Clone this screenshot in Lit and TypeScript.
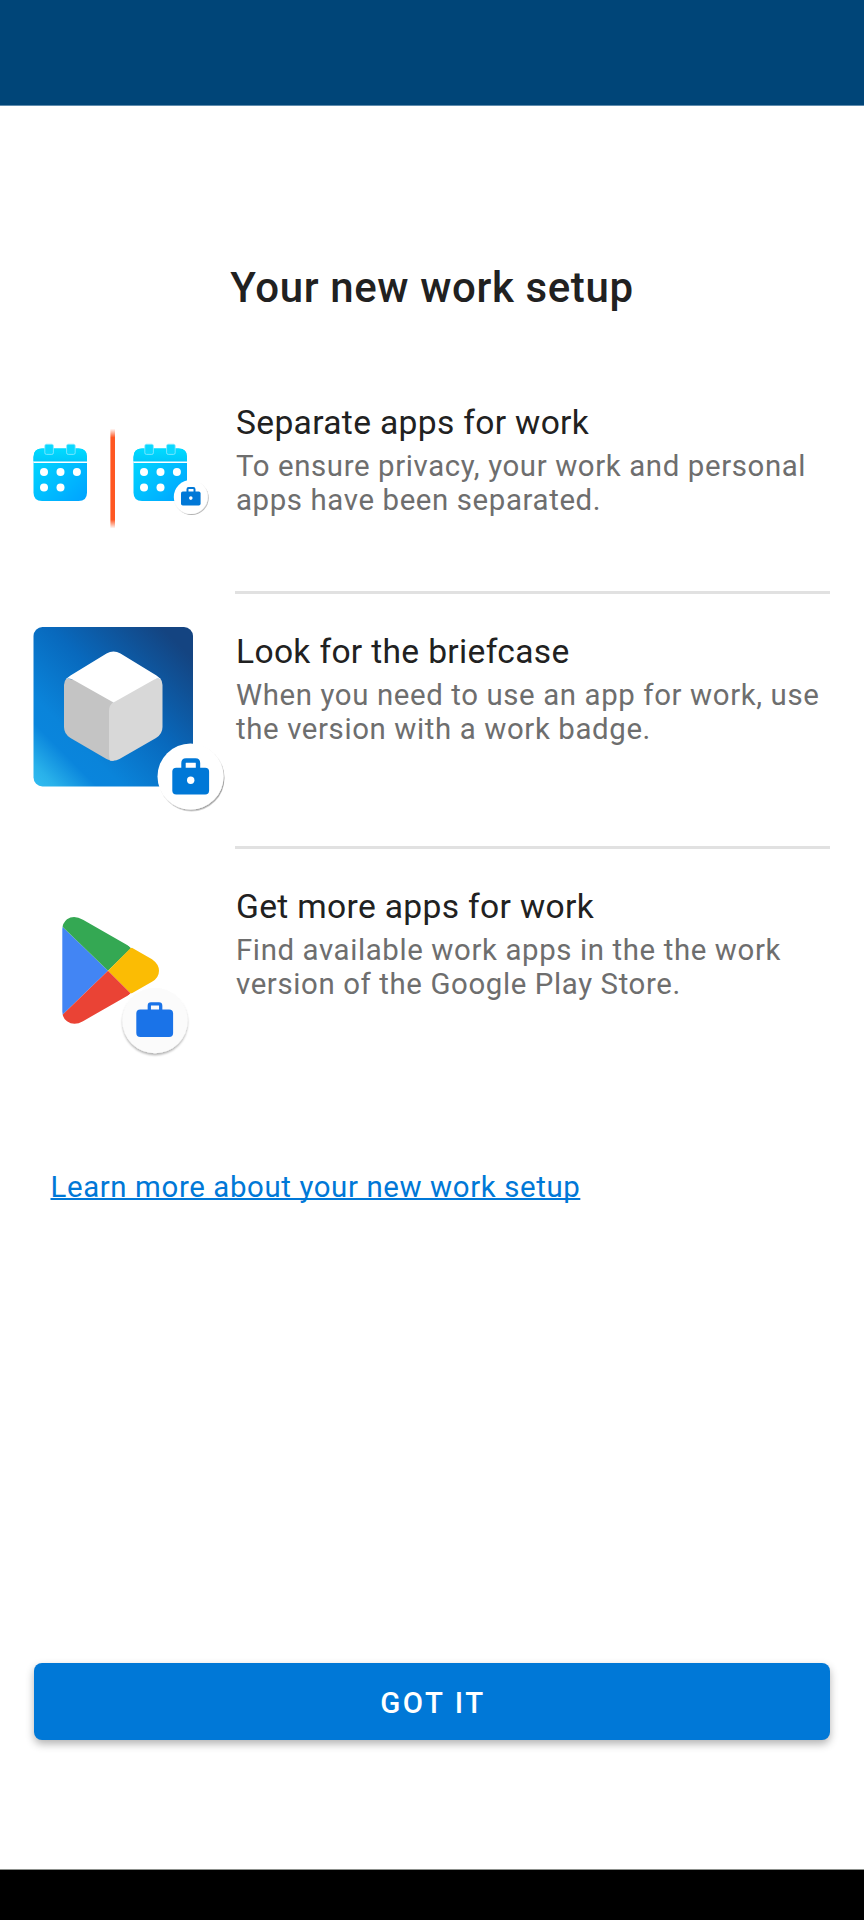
import { LitElement, html, css, svg } from "lit";
import { customElement } from "lit/decorators.js";

const calendar = (dx: number) => svg`
  <g transform="translate(${dx} 0)">
    <path d="M8.500 14H45Q53.500 14 53.500 22.500V58Q53.500 66.500 45 66.500H8.500Q0 66.500 0 58V22.500Q0 14 8.500 14Z" fill="url(#cal)"/>
    <path d="M8.500 14H45Q53.500 14 53.500 22.500V26.500H0V22.500Q0 14 8.500 14Z" fill="url(#calTop)"/>
    <path d="M0 27.600H53.500" stroke="#fff" stroke-width="1.500"/>
    <rect x="11.300" y="9.600" width="8.600" height="10.200" rx="1.600" fill="#0ad8ff" stroke="#8feaff" stroke-width=".8"/>
    <rect x="33.100" y="9.600" width="8.600" height="10.200" rx="1.600" fill="#0ad8ff" stroke="#8feaff" stroke-width=".8"/>
    <g fill="#fff"><circle cx="10.500" cy="37.300" r="4"/><circle cx="27" cy="37.300" r="4"/><circle cx="43.400" cy="37.300" r="4"/><circle cx="10.500" cy="53" r="4"/><circle cx="27" cy="53" r="4"/></g>
  </g>`;

@customElement("app-root")
export class AppRoot extends LitElement {
  static styles = css`
    :host { display: flex; flex-direction: column; height: 1920px; box-sizing: border-box; background: #fff; font-family: Roboto, sans-serif; color: #212121; }
    .status { height: 106px; flex: none; background: #004578; border-bottom: 1px solid #5f8cae; box-sizing: border-box; }
    main { flex: 1; display: flex; flex-direction: column; padding: 0 34px 0 33px; }
    h1 { margin: 157px 0 0; padding-left: 1px; text-align: center; font-size: 42px; line-height: 50px; font-weight: 500; letter-spacing: .62px; }
    .list { display: grid; margin-top: 73px; }
    .row { display: grid; grid-template-columns: 202px 1fr; }
    .art { overflow: visible; display: block; }
    .copy { border-bottom: 3px solid #e1e1e1; box-sizing: border-box; padding: 17px 0 0 1px; white-space: nowrap; }
    .first .copy { height: 208px; }
    .first p { margin-top: 5.500px; }
    .second .copy { height: 255px; padding-top: 38px; }
    .third .copy { border: 0; padding-top: 38px; height: 200px; }
    h2 { margin: 0; font-weight: 400; font-size: 33.600px; line-height: 40px; letter-spacing: .33px; }
    p { margin: 6px 0 0; font-size: 29.400px; line-height: 34.400px; letter-spacing: .62px; color: #6e6e6e; }
    .link { align-self: flex-start; margin: 100px 0 0 17.500px; font-size: 29.400px; line-height: 36px; letter-spacing: .62px; color: #0078d7; text-decoration: underline; text-decoration-thickness: 1.500px; text-underline-offset: 1px; text-decoration-skip-ink: none; white-space: nowrap; }
    button { margin: auto 0 129px 1px; height: 77px; flex: none; border: 0; border-radius: 8px; background: #0078d7; color: #fff; font: 500 29.400px/36px Roboto, sans-serif; letter-spacing: 2.600px; box-shadow: 0 4px 8px rgba(0,0,0,.3); padding: 3px 0 0 2px; }
    .nav { height: 51px; flex: none; box-sizing: border-box; background: #000; border-top: 1px solid #8c908c; }
  `;

  render() {
    return html`
      <div class="status"></div>
      <main>
        <h1>Your new work setup</h1>
        <section class="list">
          <div class="row first">
            <svg class="art" width="190" height="130" viewBox="0 -48.600 190 130">
              <defs>
                <linearGradient id="cal" x1="0" y1="0" x2="1" y2="1"><stop stop-color="#00dcff"/><stop offset="1" stop-color="#00a2ff"/></linearGradient>
                <linearGradient id="calTop" x1="0" y1="0" x2="0" y2="1"><stop stop-color="#00dcff"/><stop offset="1" stop-color="#00c8fa"/></linearGradient>
                <linearGradient id="bar" x1="0" y1="0" x2="0" y2="1"><stop stop-color="#ff5722" stop-opacity="0"/><stop offset=".09" stop-color="#ff5722"/><stop offset=".91" stop-color="#ff5722"/><stop offset="1" stop-color="#ff5722" stop-opacity="0"/></linearGradient>
                <filter id="s1" x="-20%" y="-20%" width="150%" height="150%"><feDropShadow dx=".8" dy="1" stdDeviation=".5" flood-opacity=".3"/></filter>
              </defs>
              ${calendar(0.5)}
              <rect x="77.400" y="-6" width="4.600" height="100" fill="url(#bar)"/>
              ${calendar(100.5)}
              <circle cx="157.800" cy="62.400" r="17" fill="#fff" filter="url(#s1)"/>
              <g fill="#0078d7"><path d="M154.500 57.500V54.600Q154.500 53.500 155.600 53.500H160.400Q161.500 53.500 161.500 54.600V57.500" fill="none" stroke="#0078d7" stroke-width="2"/><rect x="148" y="57" width="19.600" height="14" rx="1.800"/></g>
              <circle cx="157.800" cy="63.500" r="1.800" fill="#fff"/>
            </svg>
            <div class="copy"><h2>Separate apps for work</h2><p>To ensure privacy, your work and personal<br>apps have been separated.</p></div>
          </div>
          <div class="row second">
            <svg class="art" width="194" height="220" viewBox="-0.500 -33 194 220">
              <defs>
                <linearGradient id="tile" x1="0" y1="1" x2="1" y2="0"><stop stop-color="#32bdf2"/><stop offset=".07" stop-color="#29b1ea"/><stop offset=".2" stop-color="#0a85dc"/><stop offset=".28" stop-color="#0a84da"/><stop offset=".55" stop-color="#0869bd"/><stop offset=".9" stop-color="#144481"/><stop offset="1" stop-color="#144481"/></linearGradient>
                <filter id="s2" x="-20%" y="-20%" width="150%" height="150%"><feDropShadow dx="1" dy="1.500" stdDeviation=".5" flood-opacity=".35"/></filter>
              </defs>
              <rect x="0" y="0" width="159.500" height="159.500" rx="9" fill="url(#tile)"/>
              <path d="M33 51.500L60 56L80 75V134Q77 134 73 132L37 111Q30.500 107 30.500 100V58Q30.500 54 33 51.500Z" fill="#c4c4c4"/>
              <path d="M80 75L100 56L126.500 51Q129 54 129 58V100Q129 107 122.500 111L86 132Q82 134.500 76.500 133.500Q75.500 131 75.500 127V84Q75.500 78 80 75Z" fill="#d8d8d8"/>
              <path d="M32.500 52Q34 50.500 37 48.500L73 26.500Q80 22.500 87 26.500L123 48.500Q126 50.500 127 52Q124 50.500 119 53.500L80 75.500L41 53.500Q36 50.500 32.500 52Z" fill="#fff"/>
              <circle cx="157" cy="149.500" r="33" fill="#fff" filter="url(#s2)"/>
              <path d="M150 142V136Q150 133.500 152.500 133.500H162Q164.500 133.500 164.500 136V142" fill="none" stroke="#0078d7" stroke-width="4.400"/><rect x="138.800" y="140.700" width="36.800" height="26.700" rx="4" fill="#0078d7"/>
              <circle cx="157.200" cy="153.300" r="3.700" fill="#fff"/>
            </svg>
            <div class="copy"><h2>Look for the briefcase</h2><p>When you need to use an app for work, use<br>the version with a work badge.</p></div>
          </div>
          <div class="row third">
            <svg class="art" width="194" height="220" viewBox="33 848.800 194 220">
              <defs>
                <clipPath id="play"><path d="M62.300 929Q62.300 923 67 919Q74 914.500 83 919.500L152 959Q159 964 159 970.500Q159 977.500 152 981.500L83 1021Q74 1026 67 1021Q62.300 1018 62.300 1011Z"/></clipPath>
                <filter id="s3" x="-20%" y="-20%" width="150%" height="150%"><feDropShadow dx="0" dy="2" stdDeviation="1.200" flood-opacity=".3"/></filter>
              </defs>
              <g clip-path="url(#play)"><path d="M62 926L108 970.500L62 1015Z" fill="#4285f4"/><path d="M62 926V910H93L131 948L108 970.500Z" fill="#34a853"/><path d="M130.500 948L160 935V1000L130.500 993L108 970.500Z" fill="#fbbc04"/><path d="M62 1015V1030H93L130.500 993L108 970.500Z" fill="#ea4335"/></g>
              <circle cx="155" cy="1020.500" r="32.600" fill="#fbfbfb" filter="url(#s3)"/>
              <path d="M149.300 1010V1005.500Q149.300 1003.700 151 1003.700H159Q160.700 1003.700 160.700 1005.500V1010" fill="none" stroke="#1a73e8" stroke-width="3.300"/><rect x="136.300" y="1009.300" width="36.800" height="27.400" rx="4" fill="#1a73e8"/>
            </svg>
            <div class="copy"><h2>Get more apps for work</h2><p>Find available work apps in the the work<br>version of the Google Play Store.</p></div>
          </div>
        </section>
        <a class="link">Learn more about your new work setup</a>
        <button>GOT IT</button>
      </main>
      <div class="nav"></div>`;
  }
}
